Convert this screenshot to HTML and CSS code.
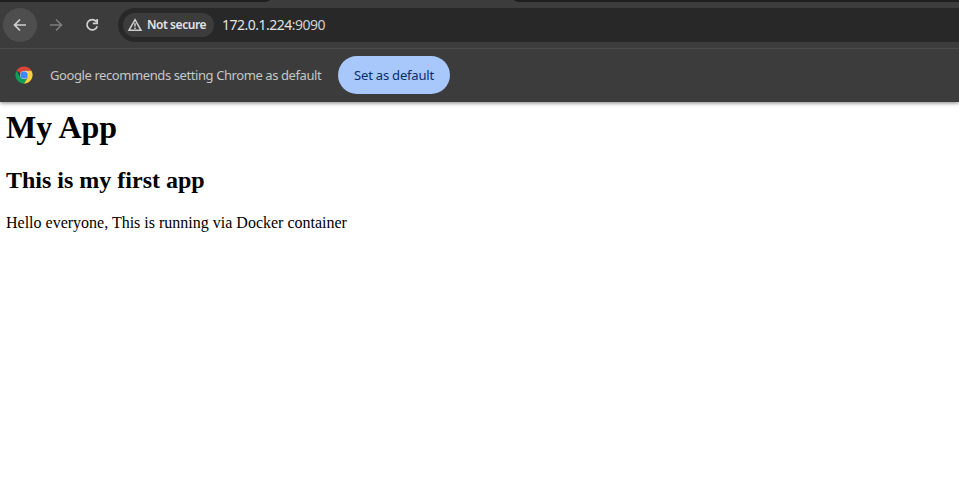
FILE: index.html
```html
<!DOCTYPE html>
<html lang="en">
<head>
<meta charset="utf-8">
<title>My App</title>
<link rel="stylesheet" href="styles.css">
</head>
<body>
<header class="browser">
  <div class="tabstrip"><div class="tab-left"></div><div class="tab-active"></div><div class="tab-right"></div></div>
  <div class="toolbar">
    <button class="nav nav-back" aria-label="Back"><svg width="16" height="16" viewBox="0 0 16 16"><path d="M14 8H3M8 2.5 2.5 8 8 13.5"/></svg></button>
    <button class="nav nav-forward" aria-label="Forward"><svg width="16" height="16" viewBox="0 0 16 16"><path d="M2 8h11M8 2.5 13.5 8 8 13.5"/></svg></button>
    <button class="nav" aria-label="Reload"><svg width="16" height="16" viewBox="0 0 16 16"><path d="M12.2 4.4A5.2 5.2 0 1 0 13.2 9.2M13.2 2v4.4H8.8"/></svg></button>
    <div class="omnibox">
      <div class="chip"><svg width="16" height="14" viewBox="0 0 16 14"><path d="M8 1.7 14 12.3H2Z"/><path d="M8 5.2v3.4M8 9.5v1.4"/></svg><span>Not secure</span></div>
      <span class="url">172.0.1.224<span class="port">:9090</span></span>
    </div>
  </div>
  <div class="infobar">
    <svg class="chrome" width="18" height="18" viewBox="0 0 48 48">
      <path fill="#db4437" d="M24 24 4.1 12.5A23 23 0 0 1 43.9 12.5H24Z"/>
      <path fill="#0f9d58" d="M24 24 34 29.7 24 47A23 23 0 0 1 4.1 12.5L14 29.7Z"/>
      <path fill="#ffcd40" d="M24 12.5H43.9A23 23 0 0 1 24 47L34 29.7Z"/>
      <circle cx="24" cy="24" r="10.5" fill="#c9d8ee"/>
      <circle cx="24" cy="24" r="9.5" fill="#4285f4"/>
    </svg>
    <span class="message">Google recommends setting Chrome as default</span>
    <button class="set-default">Set as default</button>
  </div>
</header>
<main class="page">
  <h1>My App</h1>
  <h2>This is my first app</h2>
  <p>Hello everyone, This is running via Docker container</p>
</main>
</body>
</html>
```
FILE: styles.css
```css
* { box-sizing: border-box; }
body { margin: 0; background: #fff; overflow: hidden; }
button { border: 0; padding: 0; font: inherit; }
.browser {
  height: 102px;
  background: #3c3c3c;
  color: #c7c7c7;
  font-family: "Noto Sans", "Open Sans", sans-serif;
  font-size: 13px;
  box-shadow: 0 1px 4px rgba(0, 0, 0, .5);
}
.tabstrip { display: flex; height: 2px; background: #3c3c3c; }
.tab-left { width: 270px; background: #1f1f1f; border-bottom-right-radius: 8px 2px; }
.tab-active { width: 244px; }
.tab-right { flex: 1; background: #1f1f1f; border-bottom-left-radius: 8px 2px; }
.toolbar {
  display: flex;
  align-items: center;
  height: 47px;
  padding: 0 0 1px 3px;
  border-bottom: 1px solid #4a4a4a;
}
.nav {
  display: flex;
  align-items: center;
  justify-content: center;
  width: 34px;
  height: 34px;
  margin-right: 2px;
  border-radius: 50%;
  background: transparent;
}
.nav svg, .chip svg { fill: none; stroke: #d0d0d0; stroke-width: 1.7; }
.nav-back { background: #4e4e4e; }
.nav-forward svg { stroke: #7c7c7c; }
.omnibox {
  display: flex;
  align-items: center;
  flex: 1;
  height: 34px;
  margin-left: 7px;
  padding-left: 5px;
  border-radius: 17px 0 0 17px;
  background: #282828;
}
.chip {
  display: flex;
  align-items: center;
  width: 91px;
  height: 24px;
  padding-left: 4px;
  border-radius: 12px;
  background: #3c3c3c;
  color: #e3e3e3;
  font-size: 12px;
  font-weight: 600;
  white-space: nowrap;
}
.chip svg { flex: none; margin-right: 4px; stroke-width: 1.5; }
.chip span { letter-spacing: -.45px; }
.url { margin-left: 8px; color: #e3e3e3; font-size: 14px; letter-spacing: -.5px; }
.port { color: #d0d0d0; }
.infobar { display: flex; align-items: center; height: 51px; padding-left: 15px; }
.message { width: 272px; margin-left: 17px; letter-spacing: -.41px; white-space: nowrap; }
.set-default {
  width: 112px;
  height: 38px;
  margin-left: 16px;
  border-radius: 19px;
  background: #a8c7fa;
  color: #062e6f;
  letter-spacing: -.2px;
  white-space: nowrap;
}
.page { padding: 7px 6px; color: #000; font-family: "Liberation Serif", serif; font-size: 16px; }
h1 { margin: 0 0 21px; font-size: 32px; line-height: 36px; }
h2 { margin: 0 0 20px; font-size: 24px; line-height: 28px; }
p { margin: 0; line-height: 18px; }
```
